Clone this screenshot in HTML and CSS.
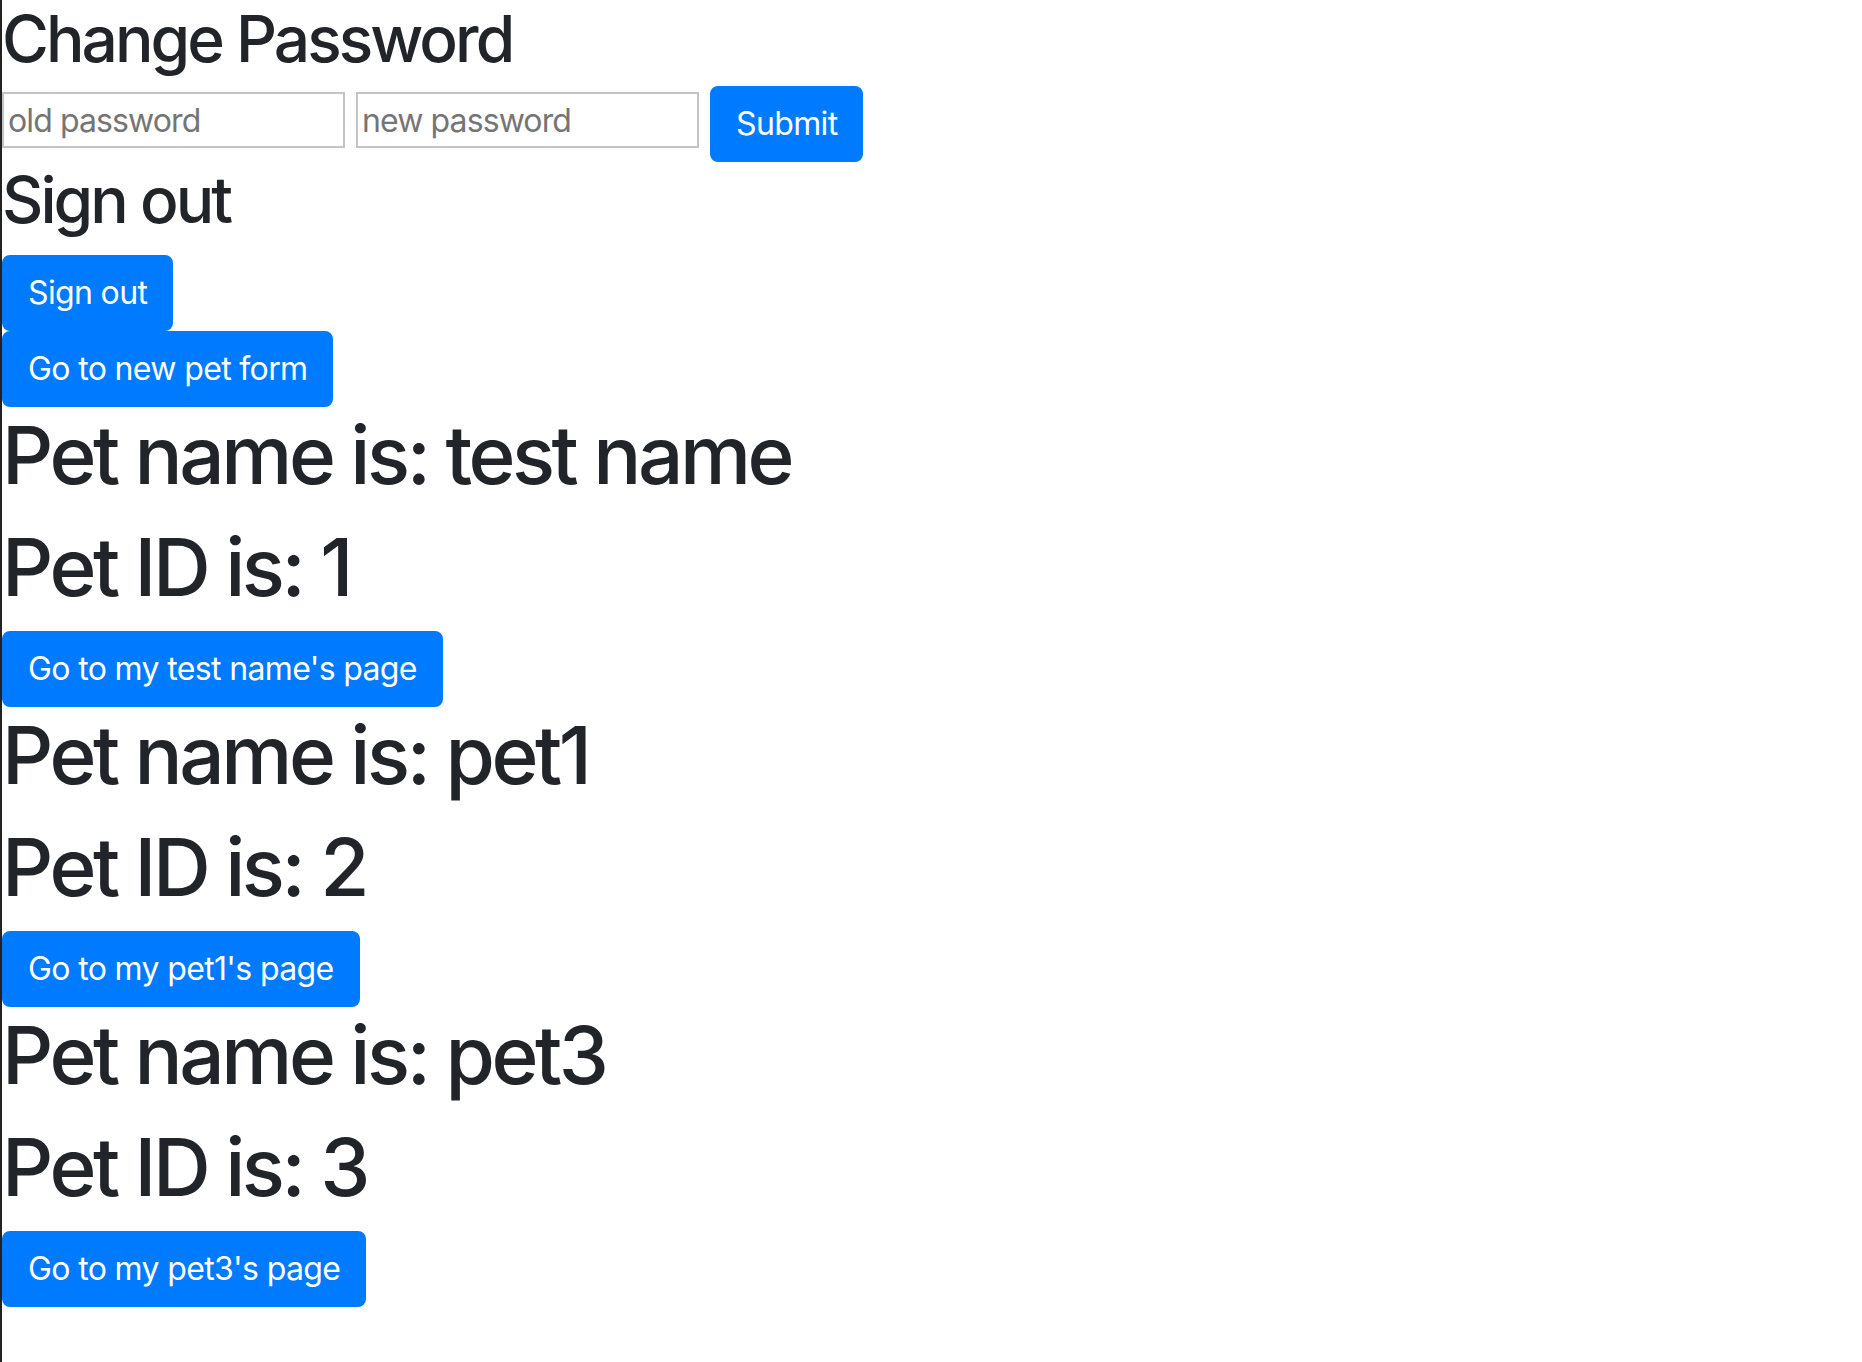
FILE: index.html
```html
<!DOCTYPE html>
<html lang="en">
<head>
<meta charset="utf-8">
<title>Pets</title>
<link rel="stylesheet" href="styles.css">
</head>
<body>
<div class="page">
  <h2 class="heading-md first">Change Password</h2>
  <form class="pw-form">
    <input class="field" type="password" placeholder="old password">
    <input class="field" type="password" placeholder="new password">
    <button class="btn" type="button">Submit</button>
  </form>
  <h2 class="heading-md">Sign out</h2>
  <div class="btn-row"><button class="btn" type="button">Sign out</button></div>
  <div class="btn-row"><button class="btn" type="button">Go to new pet form</button></div>

  <div class="pet">
    <h1 class="heading-lg">Pet name is: test name</h1>
    <h1 class="heading-lg">Pet ID is: 1</h1>
    <button class="btn" type="button">Go to my test name's page</button>
  </div>
  <div class="pet">
    <h1 class="heading-lg">Pet name is: pet1</h1>
    <h1 class="heading-lg">Pet ID is: 2</h1>
    <button class="btn" type="button">Go to my pet1's page</button>
  </div>
  <div class="pet">
    <h1 class="heading-lg">Pet name is: pet3</h1>
    <h1 class="heading-lg">Pet ID is: 3</h1>
    <button class="btn" type="button">Go to my pet3's page</button>
  </div>
</div>
</body>
</html>
```

FILE: styles.css
```css
html, body {
  margin: 0;
  padding: 0;
  background: #fff;
}

body {
  font-family: Inter, "Noto Sans", "Liberation Sans", sans-serif;
  font-size: 32px;
  line-height: 1.5;
  color: #212529;
  border-left: 2px solid #222;
  min-height: 100vh;
  box-sizing: border-box;
}

.page {
  display: flex;
  flex-direction: column;
  align-items: flex-start;
}

.heading-md {
  font-size: 64px;
  font-weight: 500;
  line-height: 1.2;
  letter-spacing: -0.046em;
  margin: 0 0 16px 0;
}

.heading-md.first {
  line-height: 78px;
  margin-bottom: 8px;
}

.heading-lg {
  font-size: 80px;
  font-weight: 500;
  line-height: 1.2;
  letter-spacing: -0.043em;
  margin: 0 0 16px 0;
}

.pw-form {
  display: flex;
  align-items: flex-start;
  gap: 11px;
  margin: 0;
}

.field {
  box-sizing: border-box;
  width: 343px;
  height: 56px;
  margin-top: 6px;
  padding: 2px 4px;
  font-family: inherit;
  font-size: 32px;
  line-height: 48px;
  letter-spacing: -0.028em;
  color: #212529;
  border: 2px solid #c4c4c4;
  border-radius: 0;
  background: #fff;
  outline: none;
}

.field::placeholder {
  color: #757575;
  opacity: 1;
}

.btn {
  display: inline-block;
  font-family: inherit;
  font-size: 32px;
  font-weight: 400;
  line-height: 48px;
  letter-spacing: -0.02em;
  padding: 12px 24px;
  color: #fff;
  background: #007bff;
  border: 2px solid #007bff;
  border-radius: 8px;
  cursor: pointer;
  margin: 0;
}

.btn-row {
  display: flex;
}

.pet {
  display: flex;
  flex-direction: column;
  align-items: flex-start;
}
```
